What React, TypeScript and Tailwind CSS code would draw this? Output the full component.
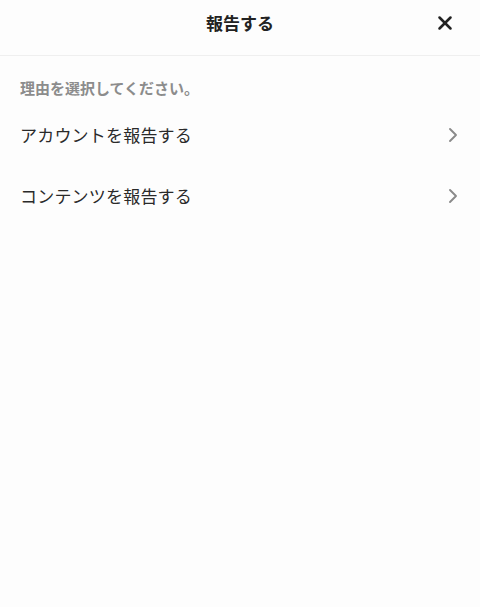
import {X} from "lucide-react";

const reasons = ["アカウントを報告する", "コンテンツを報告する"];

const Chevron = () => (
  <svg width="10" height="16" viewBox="0 0 10 16" fill="none" className="text-[#8a8a8a]">
    <path d="M2 2L8 8L2 14" stroke="currentColor" strokeWidth="1.9" strokeLinecap="round" strokeLinejoin="round" />
  </svg>
);

export default function App() {
  return (
    <div
      className="min-h-[607px] w-[480px] bg-[#fdfdfd] text-[#222]"
      style={{fontFamily: '"Noto Sans CJK JP", "Noto Sans", sans-serif'}}>
      <div className="relative flex h-[56px] justify-center border-b border-[#efefef] pt-[12px]">
        <h1 className="text-[17px] font-bold leading-[22px] text-[#222]">報告する</h1>
        <button className="absolute right-[24px] top-[12px] flex h-[22px] w-[22px] items-center justify-center text-[#222]">
          <X size={22} strokeWidth={2.8} />
        </button>
      </div>
      <div className="px-5 pt-[21px]">
        <p className="text-[15px] font-bold leading-[22px] text-[#8c8c8c]">理由を選択してください。</p>
        <div className="mt-[5px] flex flex-col">
          {reasons.map((r) => (
            <button key={r} className="flex h-[61px] w-full items-center justify-between pr-[2px] text-left">
              <span className="text-[17px] leading-none tracking-[0.2px] text-[#2a2a2a]">{r}</span>
              <Chevron />
            </button>
          ))}
        </div>
      </div>
    </div>
  );
}
